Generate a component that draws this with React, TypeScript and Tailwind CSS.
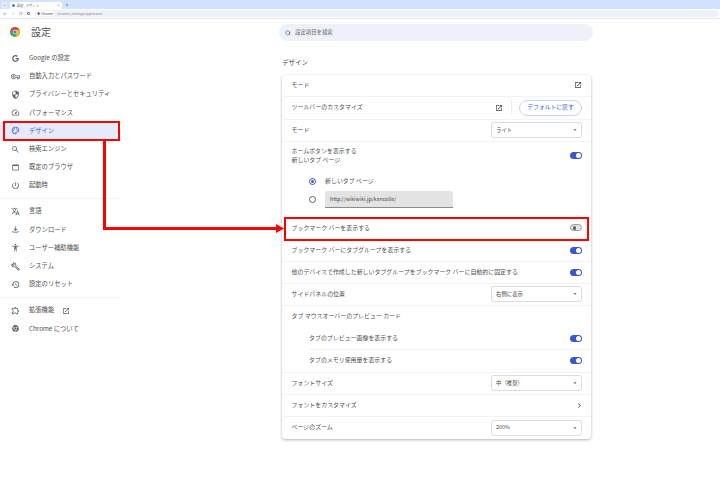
import type { ReactNode } from 'react';
import { ArrowLeft, ArrowRight, RotateCw, Plus, X, Search, ChevronRight } from 'lucide-react';
import { FaChrome, FaGoogle } from 'react-icons/fa';
import {
  MdOutlineVpnKey,
  MdOutlineSecurity,
  MdOutlineSpeed,
  MdOutlinePalette,
  MdSearch,
  MdOutlineWebAsset,
  MdOutlinePowerSettingsNew,
  MdOutlineTranslate,
  MdOutlineFileDownload,
  MdOutlineAccessibility,
  MdOutlineBuild,
  MdOutlineRestore,
  MdOutlineExtension,
  MdOutlineOpenInNew,
  MdArrowDropDown,
} from 'react-icons/md';

function ChromeLogo({ size }: { size: number }) {
  return (
    <svg width={size} height={size} viewBox="0 0 48 48" className="shrink-0">
      <circle cx="24" cy="24" r="24" fill="#34a853" />
      <path d="M3.2 12A24 24 0 0 1 24 0a24 24 0 0 1 20.8 14H24L14 30z" fill="#ea4335" />
      <path d="M24 14h20.8A24 24 0 0 1 24 48l10-18z" fill="#fbbc04" />
      <circle cx="24" cy="24" r="11" fill="#fff" />
      <circle cx="24" cy="24" r="8.5" fill="#4285f4" />
    </svg>
  );
}

function NavItem({ icon, label, active, trailing }: { icon: ReactNode; label: string; active?: boolean; trailing?: ReactNode }) {
  return (
    <div className={`h-[18.2px] flex items-center mr-[2px] rounded-r-full ${active ? 'bg-[#e6ebfc] text-[#3f62d8]' : 'text-[#4f4f4f]'}`}>
      <span className={`w-[29px] flex justify-center pl-[1px] text-[9px] ${active ? '' : 'text-[#5f6368]'}`}>{icon}</span>
      <span className="text-[6.3px] leading-none whitespace-nowrap">{label}</span>
      {trailing}
    </div>
  );
}

function Toggle({ on = true }: { on?: boolean }) {
  if (!on) {
    return (
      <span className="w-[12px] h-[7px] rounded-full bg-[#e3e3e3] border border-[#9a9c9b] flex items-center pl-[1.5px]">
        <span className="w-[3.5px] h-[3.5px] rounded-full bg-[#5f6368]" />
      </span>
    );
  }
  return (
    <span className="w-[12px] h-[7px] rounded-full bg-[#3b57c9] flex items-center justify-end pr-[1px]">
      <span className="w-[5px] h-[5px] rounded-full bg-white" />
    </span>
  );
}

function Select({ value }: { value: string }) {
  return (
    <span className="w-[91px] h-[16px] rounded-[3px] border border-[#dadce0] flex items-center justify-between pl-[4px] pr-[2px] text-[5.4px] text-[#4a4a4a]">
      {value}
      <MdArrowDropDown className="text-[8px] text-[#5f6368]" />
    </span>
  );
}

function Row({ label, children, h = 'h-[22px]', border = true, inset }: { label: ReactNode; children?: ReactNode; h?: string; border?: boolean; inset?: boolean }) {
  return (
    <div className={`${h} flex items-center justify-between pr-[9px] ${inset ? 'ml-[27px]' : 'pl-[9.5px]'} ${border ? 'border-b border-[#f1f3f4]' : ''}`}>
      <span className="text-[5.95px] leading-[8.5px] text-[#4f4f4f] whitespace-nowrap">{label}</span>
      {children}
    </div>
  );
}

export default function App() {
  return (
    <div className="w-[720px] h-[480px] overflow-hidden relative bg-white font-['Noto_Sans_CJK_JP','Noto_Sans',sans-serif]">
      {/* browser tabs */}
      <div className="h-[9px] bg-[#d3e3fd] flex items-end pl-[2px] gap-[2px]">
        <span className="w-[5px] h-[6px] mb-[1px] rounded-[1px] bg-[#e8effc] text-[4px] leading-[5px] text-center text-[#444]">⌄</span>
        <div className="w-[52px] h-[7.5px] bg-white rounded-t-[2px] flex items-center px-[2px] gap-[1px] ml-[1px]">
          <span className="w-[3px] h-[3px] rounded-full bg-[#4d72d8]" />
          <span className="ml-[1px] text-[3.2px] text-[#555] grow leading-none">設定 - デザイン</span>
          <X size={3} className="text-[#444]" />
        </div>
        <Plus size={4} className="text-[#444] mb-[2px] ml-[1px]" />
      </div>
      {/* toolbar */}
      <div className="h-[10px] flex items-center border-b border-[#e8eaed] pl-[3px] gap-[4px] text-[#555]">
        <ArrowLeft size={4} />
        <ArrowRight size={4} className="text-[#bbb]" />
        <RotateCw size={3.5} />
        <span className="w-[3px] h-[3px] border border-[#777] rounded-[1px]" />
        <div className="ml-[1px] h-[7px] w-[684px] rounded-full bg-[#eef2fb] flex items-center pl-[1px] gap-[3px]">
          <span className="bg-white rounded-full px-[1.5px] text-[3.2px] leading-[5px] text-[#444]">◉ Chrome</span>
          <span className="text-[3.2px] leading-none text-[#888]">chrome://settings/appearance</span>
        </div>
      </div>

      <div className="flex">
        {/* sidebar */}
        <aside className="w-[120px] shrink-0">
          <div className="h-[30px] pb-[4px] flex items-center pl-[10px] gap-[11px]">
            <ChromeLogo size={10} />
            <span className="text-[10px] leading-none text-[#4f4f4f]">設定</span>
          </div>
          <NavItem icon={<FaGoogle className="text-[7px]" />} label="Google の設定" />
          <NavItem icon={<MdOutlineVpnKey />} label="自動入力とパスワード" />
          <NavItem icon={<MdOutlineSecurity />} label="プライバシーとセキュリティ" />
          <NavItem icon={<MdOutlineSpeed />} label="パフォーマンス" />
          <NavItem icon={<MdOutlinePalette />} label="デザイン" active />
          <NavItem icon={<MdSearch />} label="検索エンジン" />
          <NavItem icon={<MdOutlineWebAsset />} label="既定のブラウザ" />
          <NavItem icon={<MdOutlinePowerSettingsNew />} label="起動時" />
          <div className="my-[3.5px] border-t border-[#f1f3f4]" />
          <NavItem icon={<MdOutlineTranslate />} label="言語" />
          <NavItem icon={<MdOutlineFileDownload />} label="ダウンロード" />
          <NavItem icon={<MdOutlineAccessibility />} label="ユーザー補助機能" />
          <NavItem icon={<MdOutlineBuild />} label="システム" />
          <NavItem icon={<MdOutlineRestore />} label="設定のリセット" />
          <div className="my-[3.5px] border-t border-[#f1f3f4]" />
          <NavItem
            icon={<MdOutlineExtension />}
            label="拡張機能"
            trailing={<MdOutlineOpenInNew className="ml-[8px] text-[8px] text-[#5f6368]" />}
          />
          <NavItem icon={<FaChrome className="text-[7px]" />} label="Chrome について" />
        </aside>

        {/* main column */}
        <main className="pl-[159px]">
          <div className="mt-[5px] w-[314px] h-[17px] rounded-full bg-[#eef1f9] flex items-center pl-[6px] gap-[4px]">
            <Search size={6} className="text-[#444]" />
            <span className="text-[5.4px] leading-none text-[#666]">設定項目を検索</span>
          </div>

          <h2 className="ml-[3px] mt-[16px] text-[6.5px] leading-[11px] font-normal text-[#4a4a4a]">デザイン</h2>

          <div className="ml-[3px] mt-[6.5px] w-[309px] rounded-[4px] bg-white shadow-[0_1px_3px_rgba(60,64,67,0.4)]">
            <Row label="モード">
              <MdOutlineOpenInNew className="text-[8px] text-[#444]" />
            </Row>
            <Row label="ツールバーのカスタマイズ" h="h-[23px]">
              <span className="flex items-center">
                <MdOutlineOpenInNew className="text-[8px] text-[#444]" />
                <span className="ml-[8px] h-[15px] border-l border-[#eceef0]" />
                <span className="ml-[7px] h-[16px] w-[63px] rounded-full border border-[#c7d5f5] flex items-center justify-center text-[5.8px] text-[#3f62d8]">
                  デフォルトに戻す
                </span>
              </span>
            </Row>
            <Row label="モード">
              <Select value="ライト" />
            </Row>
            <Row
              label={
                <>
                  ホームボタンを表示する
                  <br />
                  新しいタブ ページ
                </>
              }
              h="h-[28px]"
              border={false}
            >
              <Toggle />
            </Row>
            <div className="pl-[27px] pt-[2.5px] h-[47.5px]">
              <div className="h-[19px] flex items-center gap-[9px]">
                <span className="w-[7px] h-[7px] rounded-full border border-[#3b57c9] flex items-center justify-center">
                  <span className="w-[3.5px] h-[3.5px] rounded-full bg-[#3b57c9]" />
                </span>
                <span className="text-[5.95px] text-[#4f4f4f]">新しいタブ ページ</span>
              </div>
              <div className="flex items-center gap-[9px]">
                <span className="w-[7px] h-[7px] rounded-full border border-[#5f6368]" />
                <span className="w-[128px] h-[17px] bg-[#e3e3e3] border-b border-[#8a8a8a] rounded-t-[3px] flex items-center pl-[5px] text-[5.2px] text-[#4a4a4a]">
                  http://wikiwiki.jp/kancolle/
                </span>
              </div>
            </div>
            <Row label="ブックマーク バーを表示する" h="h-[22.5px]">
              <Toggle on={false} />
            </Row>
            <Row label="ブックマーク バーにタブグループを表示する">
              <Toggle />
            </Row>
            <Row label="他のデバイスで作成した新しいタブグループをブックマーク バーに自動的に固定する">
              <Toggle />
            </Row>
            <Row label="サイドパネルの位置">
              <Select value="右側に表示" />
            </Row>
            <Row label="タブ マウスオーバーのプレビュー カード" border={false} />
            <Row label="タブのプレビュー画像を表示する" inset>
              <Toggle />
            </Row>
            <div className="border-b border-[#f1f3f4]">
              <Row label="タブのメモリ使用量を表示する" inset border={false}>
                <Toggle />
              </Row>
            </div>
            <Row label="フォントサイズ">
              <Select value="中（推奨）" />
            </Row>
            <Row label="フォントをカスタマイズ">
              <ChevronRight size={7} strokeWidth={3} className="text-[#333] -mr-[1px]" />
            </Row>
            <Row label="ページのズーム" border={false}>
              <Select value="200%" />
            </Row>
          </div>
        </main>
      </div>

      {/* red annotations over the screenshot */}
      <div className="absolute left-[3px] top-[121px] w-[117px] h-[20px] border-2 border-[#ff0000]" />
      <div className="absolute left-[284px] top-[217px] w-[305px] h-[24px] border-2 border-[#ff0000]" />
      <div className="absolute left-[103px] top-[141px] w-[3px] h-[89px] bg-[#ff0000]" />
      <div className="absolute left-[103px] top-[227px] w-[175px] h-[3px] bg-[#ff0000]" />
      <svg className="absolute left-[276px] top-[224px]" width="8" height="9" viewBox="0 0 8 9">
        <path d="M0 0l8 4.5L0 9z" fill="#ff0000" />
      </svg>
    </div>
  );
}
